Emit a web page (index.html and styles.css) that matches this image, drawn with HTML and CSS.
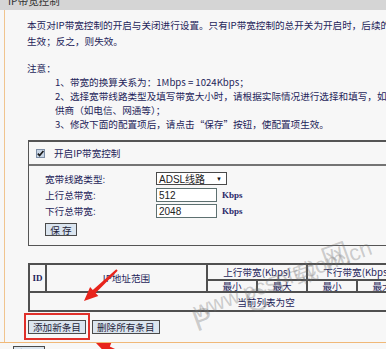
FILE: index.html
```html
<!DOCTYPE html>
<html lang="zh-CN">
<head>
<meta charset="utf-8">
<title>IP带宽控制</title>
<link rel="stylesheet" href="styles.css">
</head>
<body>
<div class="page">
  <div class="titlebar"><span class="t">IP带宽控制</span></div>
  <div class="frame">
    <p class="intro">本页对IP带宽控制的开启与关闭进行设置。只有IP带宽控制的总开关为开启时，后续的“IP带宽控制规则”才能</p>
    <p class="intro">生效；反之，则失效。</p>
    <p class="note-title">注意：</p>
    <div class="notes">
      <div>1、带宽的换算关系为：1Mbps = 1024Kbps；</div>
      <div>2、选择宽带线路类型及填写带宽大小时，请根据实际情况进行选择和填写，如不清楚，请咨询您的带宽提</div>
      <div>供商（如电信、网通等）；</div>
      <div>3、修改下面的配置项后，请点击“保存”按钮，使配置项生效。</div>
    </div>

    <div class="box">
      <div class="box-head">
        <span class="check"><svg width="9" height="9" viewBox="0 0 9 9"><path d="M1.8 4.6 L3.6 6.6 L7.4 2" fill="none" stroke="#1a1a1a" stroke-width="1.6"/></svg></span>
        <span>开启IP带宽控制</span>
      </div>
      <div class="form">
        <div class="row r1"><span class="label">宽带线路类型:</span><span class="select"><span>ADSL线路</span><span class="arrow">▼</span></span></div>
        <div class="row r2"><span class="label">上行总带宽:</span><span class="input">512</span><span class="unit">Kbps</span></div>
        <div class="row r3"><span class="label">下行总带宽:</span><span class="input">2048</span><span class="unit">Kbps</span></div>
        <div class="row r4"><span class="btn save">保 存</span></div>
      </div>
    </div>

    <table class="rules">
      <colgroup>
        <col style="width:17px"><col style="width:161px"><col style="width:50px"><col style="width:50px"><col style="width:50px"><col style="width:50px"><col style="width:32px"><col style="width:32px"><col style="width:32px">
      </colgroup>
      <tr class="h1">
        <td rowspan="2" class="id">ID</td>
        <td rowspan="2">IP地址范围</td>
        <td colspan="2">上行带宽(Kbps)</td>
        <td colspan="2">下行带宽(Kbps)</td>
        <td rowspan="2">备注</td>
        <td rowspan="2">启用</td>
        <td rowspan="2">配置</td>
      </tr>
      <tr class="h2">
        <td>最小</td><td>最大</td><td>最小</td><td>最大</td>
      </tr>
      <tr class="empty">
        <td colspan="9">当前列表为空</td>
      </tr>
    </table>

    <div class="actions">
      <span class="mark"><span class="btn">添加新条目</span></span>
      <span class="btn">删除所有条目</span>
    </div>
  </div>
  <div class="hr"></div>
  <div class="help"><span class="btn">帮 助</span></div>

  <div class="watermark">
    <span class="wm p">P</span>
    <span class="wm c">C</span>
    <span class="wm x1">下</span>
    <span class="wm x2">载</span>
    <span class="wm x3">网</span>
    <span class="wm url">www.pcsoft.com.cn</span>
  </div>

  <svg class="arrows" width="386" height="349" viewBox="0 0 386 349">
    <polygon points="84,301 98.3,295.9 95.6,293 117.7,270.7 116.3,269.3 92.8,290 90.1,287.1" fill="#e8241c"/>
    <polygon points="96,343 111.3,343 109.8,346.5 140.4,361.1 139.6,362.9 108,350.5 106.5,354" fill="#e8241c"/>
  </svg>
</div>
</body>
</html>
```
FILE: styles.css
```css
html, body {
  margin: 0;
  padding: 0;
}
body {
  background: #f7f7f7;
  font-family: "Noto Sans CJK SC", "Liberation Sans", sans-serif;
  font-size: 9.6px;
  color: #1e1e5a;
}
.page {
  position: relative;
  width: 386px;
  height: 349px;
  overflow: hidden;
}
.titlebar {
  height: 10px;
  background: #d5d5d5;
  overflow: hidden;
  padding-left: 8px;
}
.titlebar .t {
  display: block;
  margin-top: -6px;
  line-height: 14px;
  font-size: 10.5px;
  color: #333;
  white-space: nowrap;
}
.frame {
  margin-left: 4px;
  border-left: 1px solid #f0c48e;
  padding: 7px 0 8px 22px;
  width: 600px;
}
.intro {
  margin: 0;
  line-height: 16px;
  white-space: nowrap;
}
.note-title {
  margin: 12px 0 0 0;
  line-height: 14px;
}
.notes {
  padding-left: 28px;
  line-height: 14px;
  white-space: nowrap;
}
.box {
  margin-top: 9px;
  margin-left: 1px;
  width: 480px;
  border-top: 2px solid #555;
  border-left: 1px solid #555;
  border-bottom: 1px solid #555;
}
.box-head {
  height: 22px;
  display: flex;
  align-items: center;
  gap: 9px;
  padding-left: 7px;
  border-bottom: 2px solid #747474;
}
.check {
  width: 9px;
  height: 9px;
  box-sizing: border-box;
  background: #c9d6e6;
  border: 1px solid #7d8ea6;
  display: flex;
  align-items: center;
  justify-content: center;
}
.check svg {
  display: block;
  margin: -1px;
}
.form {
  padding: 6px 0 9px 16px;
}
.row {
  display: flex;
  align-items: center;
}
.r1 { height: 13px; margin-bottom: 3px; }
.r2 { height: 14px; margin-bottom: 2px; }
.r3 { height: 14px; margin-bottom: 5px; }
.r4 { height: 13px; }
.label {
  width: 111px;
  flex: none;
}
.select {
  width: 71px;
  height: 13px;
  box-sizing: border-box;
  background: #fff;
  border: 1px solid #4a4a4a;
  display: flex;
  align-items: center;
  justify-content: space-between;
  padding: 0 4px 0 2px;
  font-family: "Liberation Sans", "Noto Sans CJK SC", sans-serif;
  font-size: 10px;
  color: #222;
}
.select .arrow {
  font-size: 6px;
  color: #111;
}
.input {
  width: 61px;
  height: 14px;
  box-sizing: border-box;
  background: #fff;
  border: 1px solid #5d7070;
  padding-left: 2px;
  display: flex;
  align-items: center;
  font-family: "Liberation Sans", sans-serif;
  font-size: 10px;
  color: #222;
}
.unit {
  margin-left: 5px;
  font-family: "Liberation Serif", serif;
  font-size: 9px;
  font-weight: bold;
  color: #2a2a6a;
}
.btn {
  display: inline-flex;
  align-items: center;
  justify-content: center;
  box-sizing: border-box;
  height: 14px;
  padding: 0 4px;
  background: #dbe5ef;
  border: 1px solid #4a4a4a;
  color: #1e1e3a;
  white-space: nowrap;
}
.save {
  width: 32px;
  height: 13px;
  padding: 0;
}
.rules {
  margin-top: 17px;
  margin-left: 1px;
  border-collapse: collapse;
  table-layout: fixed;
  width: 474px;
}
.rules td {
  border: 2px solid #505050;
  padding: 0;
  text-align: center;
  line-height: 10px;
  white-space: nowrap;
  overflow: hidden;
}
.rules .h1 td { height: 14px; }
.rules .h2 td { height: 10px; }
.rules .empty td { height: 17px; }
.rules td.id {
  font-family: "Liberation Serif", serif;
  font-weight: bold;
  font-size: 9px;
}
.actions {
  margin-top: 8px;
  display: flex;
  gap: 6px;
  margin-left: 1px;
}
.mark {
  position: relative;
  display: inline-flex;
}
.mark::after {
  content: "";
  position: absolute;
  left: -4px;
  right: -4px;
  top: -7px;
  bottom: -6px;
  border: 2px solid #e0302a;
}
.hr {
  border-top: 1px solid #f0b878;
}
.help {
  padding: 3px 0 0 13px;
}
.help .btn {
  width: 32px;
  padding: 0;
}
.watermark {
  position: absolute;
  left: 0;
  top: 0;
  width: 386px;
  height: 349px;
  pointer-events: none;
}
.wm {
  position: absolute;
  color: rgba(110, 110, 110, 0.32);
  font-family: "Liberation Sans", "Noto Sans CJK SC", sans-serif;
  transform: rotate(-20deg);
  white-space: nowrap;
  line-height: 1;
}
.wm.p { left: 193px; top: 304px; font-size: 30px; }
.wm.c { left: 245px; top: 284px; font-size: 32px; }
.wm.x1 { left: 269px; top: 270px; font-size: 22px; font-family: "Noto Sans CJK SC", sans-serif; }
.wm.x2 { left: 293px; top: 260px; font-size: 24px; font-family: "Noto Sans CJK SC", sans-serif; }
.wm.x3 { left: 321px; top: 240px; font-size: 28px; font-family: "Noto Sans CJK SC", sans-serif; }
.wm.url { left: 198px; top: 300px; font-size: 22px; transform-origin: 0 100%; }
.arrows {
  position: absolute;
  left: 0;
  top: 0;
  pointer-events: none;
}
```
